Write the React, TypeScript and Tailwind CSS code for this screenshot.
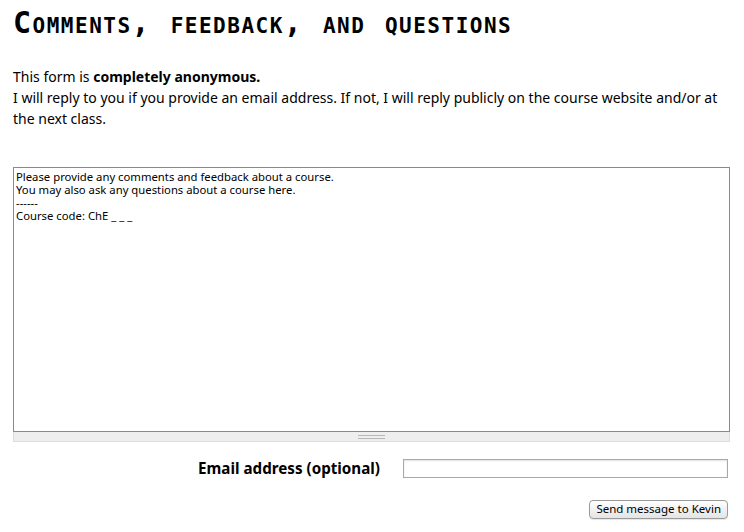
export default function App() {
  return (
    <div className="h-[532px] w-[744px] overflow-hidden bg-white px-[13px] text-black font-['Noto_Sans',Arial,sans-serif]">
      <h1 className="pt-[5px] font-['DejaVu_Sans_Mono',monospace] text-[30px] font-bold leading-[36px] tracking-[1.5px] [font-variant-caps:small-caps]">
        Comments, feedback, and questions
      </h1>

      <div className="mt-[25px] text-[14px] leading-[21px]">
        <p>
          This form is <strong>completely anonymous.</strong>
        </p>
        <p>
          I will reply to you if you provide an email address. If not, I will
          reply publicly on the course website and/or at the next class.
        </p>
      </div>

      <div className="mt-[38px] w-[717px]">
        <textarea
          className="block h-[265px] w-full resize-none border border-[#8a8a8a] px-[2px] pt-[2px] text-[11.3px] leading-[13px] outline-none font-['Noto_Sans',Arial,sans-serif]"
          defaultValue={
            "Please provide any comments and feedback about a course.\nYou may also ask any questions about a course here.\n------\nCourse code: ChE _ _ _"
          }
        />
        <div className="flex h-[10px] items-center justify-center border border-t-0 border-[#dcdcdc] bg-[#eeeeee]">
          <div className="flex w-[27px] flex-col gap-[2px]">
            <div className="h-px bg-[#b8b8b8]" />
            <div className="h-px bg-[#b8b8b8]" />
          </div>
        </div>
      </div>

      <div className="mt-[15px] flex w-[715px] items-center">
        <label className="w-[367px] text-right text-[15.2px] font-bold">
          Email address (optional)
        </label>
        <input
          type="text"
          className="ml-[23px] h-[19px] w-[325px] border border-[#a9a9a9] shadow-[inset_0_1px_2px_rgba(0,0,0,0.12)] outline-none"
        />
      </div>

      <div className="mt-[20px] flex w-[715px] justify-end">
        <button className="h-[19px] rounded-[4px] border border-[#9a9a9a] bg-gradient-to-b from-white to-[#e4e4e4] px-[6px] text-[11.5px] leading-[16px] shadow-[0_1px_1px_rgba(0,0,0,0.1)]">
          Send message to Kevin
        </button>
      </div>
    </div>
  );
}
